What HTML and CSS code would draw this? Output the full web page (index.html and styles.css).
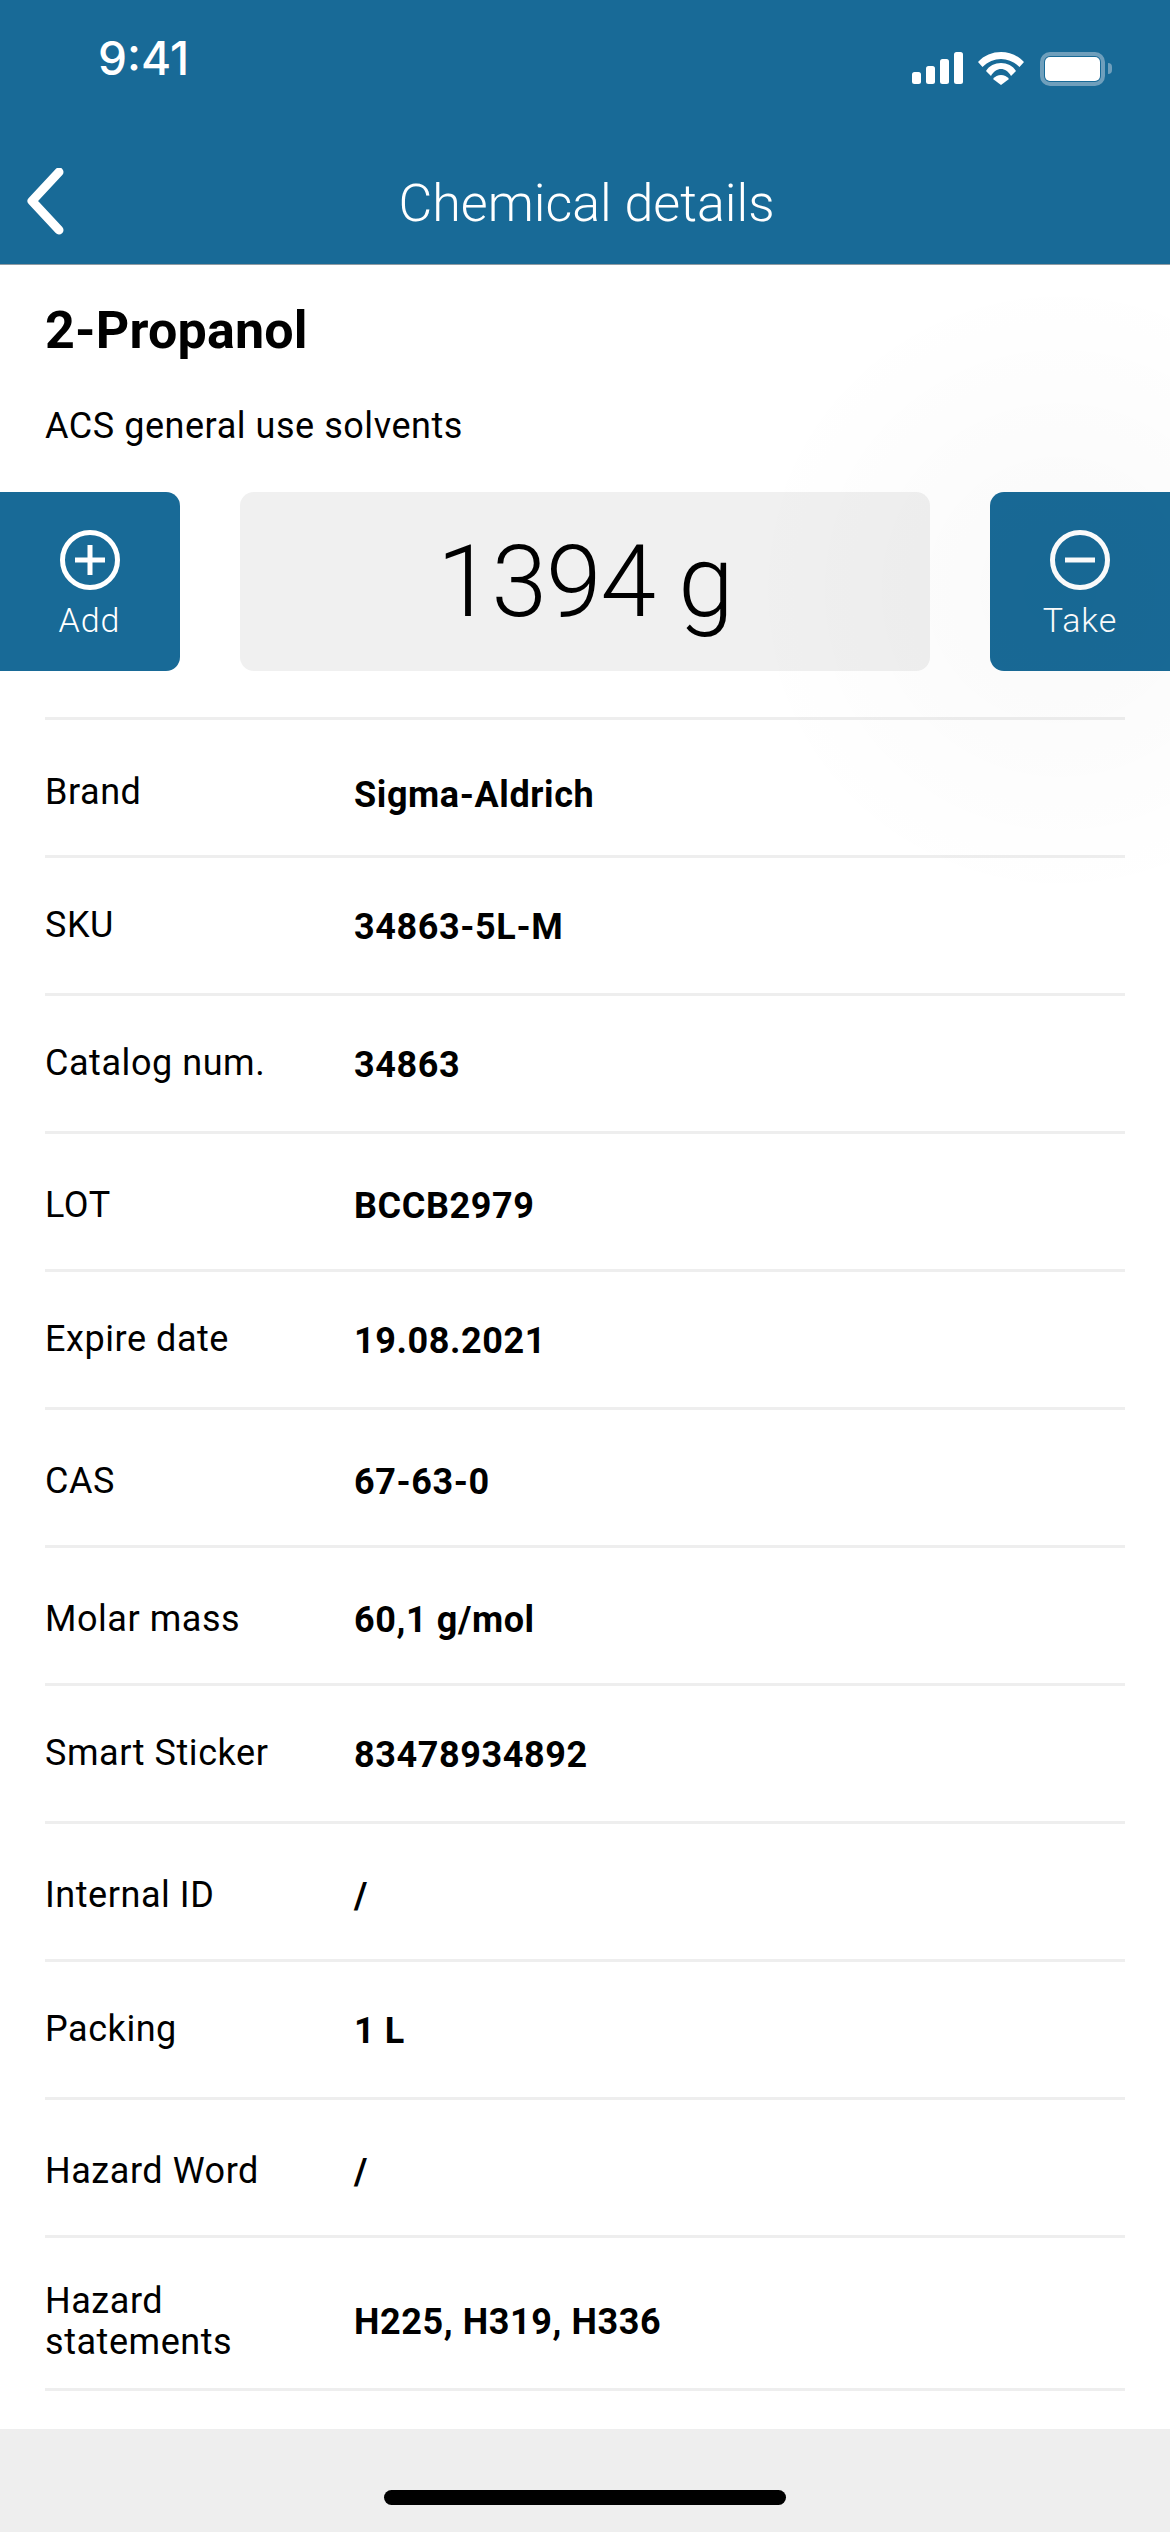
FILE: index.html
```html
<!DOCTYPE html>
<html lang="en">

<head>
  <meta charset="UTF-8">
  <meta name="viewport" content="width=device-width, initial-scale=1.0">
  <title>Chemical details</title>
  <link rel="stylesheet" href="styles.css">
</head>

<body>
  <div class="page">
    <!--header-->
    <header class="top">
      <div class="status">
        <span class="time">9:41</span>
        <div class="status-icons">
          <svg class="signal" width="51" height="32" viewBox="0 0 51 32">
            <rect x="0" y="20" width="9" height="12" rx="2.500" />
            <rect x="14" y="14" width="9" height="18" rx="2.500" />
            <rect x="28" y="7" width="9" height="25" rx="2.500" />
            <rect x="42" y="0" width="9" height="32" rx="2.500" />
          </svg>
          <svg class="wifi" width="46" height="33" viewBox="0 0 46 33">
            <path d="M0 10C12 -3.300 34 -3.300 46 10L41.500 15C31 4.300 15 4.300 4.500 15Z" />
            <path d="M8 19C14 8.300 32 8.300 38 19L33 24C28 14.700 18 14.700 13 24Z" />
            <path d="M15 27C19 21.700 27 21.700 31 27L23 33Z" />
          </svg>
          <div class="battery">
            <div class="battery-level"></div>
          </div>
          <div class="battery-cap"></div>
        </div>
      </div>
      <div class="nav">
        <svg class="back" width="40" height="68" viewBox="0 0 40 68">
          <path d="M33 4L6 33L33 62" />
        </svg>
        <h1>Chemical details</h1>
      </div>
    </header>

    <main class="content">
      <h2>2-Propanol</h2>
      <p class="sub">ACS general use solvents</p>

      <div class="stock">
        <div class="stock-btn add">
          <svg width="60" height="60" viewBox="0 0 60 60">
            <circle cx="30" cy="30" r="27.500" />
            <path d="M30 15V45M15 30H45" />
          </svg>
          <span>Add</span>
        </div>
        <div class="amount">1394 g</div>
        <div class="stock-btn take">
          <svg width="60" height="60" viewBox="0 0 60 60">
            <circle cx="30" cy="30" r="27.500" />
            <path d="M15 30H45" />
          </svg>
          <span>Take</span>
        </div>
      </div>

      <div class="details">
        <div class="row first"><span class="label">Brand</span><span class="value">Sigma-Aldrich</span></div>
        <div class="row"><span class="label">SKU</span><span class="value">34863-5L-M</span></div>
        <div class="row"><span class="label">Catalog num.</span><span class="value">34863</span></div>
        <div class="row low"><span class="label">LOT</span><span class="value">BCCB2979</span></div>
        <div class="row"><span class="label">Expire date</span><span class="value">19.08.2021</span></div>
        <div class="row low"><span class="label">CAS</span><span class="value">67-63-0</span></div>
        <div class="row low"><span class="label">Molar mass</span><span class="value">60,1 g/mol</span></div>
        <div class="row"><span class="label">Smart Sticker</span><span class="value">83478934892</span></div>
        <div class="row low"><span class="label">Internal ID</span><span class="value">/</span></div>
        <div class="row"><span class="label">Packing</span><span class="value">1 L</span></div>
        <div class="row low"><span class="label">Hazard Word</span><span class="value">/</span></div>
        <div class="row tall"><span class="label">Hazard<br>statements</span><span class="value">H225, H319, H336</span></div>
      </div>
    </main>

    <footer class="bottom">
      <div class="home-bar"></div>
    </footer>

    <div class="shade"></div>
  </div>
</body>

</html>
```

FILE: styles.css
```css
* {
  margin: 0;
  padding: 0;
  box-sizing: border-box;
}

html,
body {
  width: 1170px;
  height: 2532px;
  overflow: hidden;
  background-color: #fff;
}

body {
  font-family: Roboto, "Liberation Sans", sans-serif;
  color: #000;
}

.page {
  position: relative;
  display: flex;
  flex-direction: column;
  width: 1170px;
  height: 2532px;
}

/* header */
.top {
  height: 265px;
  background-color: #186a97;
  border-bottom: 1px solid #8f9ba3;
  color: #fff;
}

.status {
  display: flex;
  justify-content: space-between;
  height: 130px;
  padding: 33px 58px 0 98px;
}

.time {
  font-family: Inter, "Liberation Sans", sans-serif;
  font-size: 46px;
  font-weight: 500;
  line-height: 50px;
}

.status-icons {
  display: flex;
  align-items: flex-start;
  padding-top: 19px;
  height: 60px;
}

.signal {
  fill: #fff;
  margin-right: 15px;
}

.wifi {
  fill: #fff;
  margin-right: 16px;
}

.battery {
  width: 65px;
  height: 34px;
  padding: 1px;
  border: 4px solid #6f9fbc;
  border-radius: 10px;
}

.battery-level {
  width: 100%;
  height: 100%;
  background-color: #fff;
  border-radius: 5px;
}

.battery-cap {
  width: 4px;
  height: 11px;
  margin: 11px 0 0 3px;
  background-color: #6f9fbc;
  border-radius: 0 6px 6px 0;
}

.nav {
  position: relative;
  display: flex;
  justify-content: center;
  height: 134px;
  padding-left: 3px;
}

.nav h1 {
  height: 70px;
  margin-top: 39px;
  font-size: 52px;
  font-weight: 300;
  line-height: 70px;
}

.back {
  position: absolute;
  left: 26px;
  top: 38px;
  fill: none;
  stroke: #fff;
  stroke-width: 9;
  stroke-linecap: round;
  stroke-linejoin: round;
}

/* main */
.content {
  flex: 1;
}

.content h2 {
  padding: 38px 45px 0;
  font-size: 52px;
  font-weight: 700;
  letter-spacing: .2px;
  line-height: 56px;
}

.sub {
  padding: 45px 45px 0;
  font-size: 36px;
  font-weight: 400;
  letter-spacing: .54px;
  line-height: 44px;
}

.stock {
  display: flex;
  justify-content: space-between;
  height: 179px;
  margin-top: 44px;
}

.stock-btn {
  display: flex;
  flex-direction: column;
  align-items: center;
  width: 180px;
  padding-top: 38px;
  background-color: #186a97;
  color: #fff;
  font-size: 34px;
  font-weight: 300;
  letter-spacing: 1px;
}

.stock-btn svg {
  fill: none;
  stroke: #fff;
  stroke-width: 5;
  margin-bottom: 10px;
}

.stock-btn.add {
  border-radius: 0 14px 14px 0;
  padding-right: 1px;
}

.stock-btn.take {
  border-radius: 14px 0 0 14px;
}

.amount {
  width: 690px;
  background-color: #f0f0f0;
  border-radius: 14px;
  font-size: 100px;
  font-weight: 300;
  letter-spacing: -1px;
  line-height: 179px;
  text-align: center;
}

.details {
  margin: 46px 45px 0;
  border-top: 3px solid #eee;
}

.row {
  display: flex;
  align-items: center;
  height: 138px;
  border-bottom: 3px solid #eee;
  font-size: 36px;
  letter-spacing: .55px;
}

.row.first {
  padding-top: 10px;
}

.row.low {
  padding-top: 7px;
}

.row.tall {
  height: 153px;
  padding-top: 18px;
}

.label {
  width: 309px;
  font-weight: 400;
  line-height: 41px;
}

.value {
  margin-top: 2px;
  font-weight: 700;
  letter-spacing: .6px;
}

.row.first .value {
  margin-top: 4px;
}

.row.tall .value {
  margin-top: 0;
}

/* bottom bar */
.bottom {
  display: flex;
  justify-content: center;
  height: 103px;
  padding-top: 61px;
  background-color: #eee;
}

.home-bar {
  width: 402px;
  height: 15px;
  background-color: #000;
  border-radius: 8px;
}

/* faint shading on the right */
.shade {
  position: absolute;
  left: 680px;
  top: 270px;
  width: 490px;
  height: 640px;
  background: radial-gradient(circle 320px at 380px 320px, rgba(0, 0, 0, .022), rgba(0, 0, 0, 0));
  pointer-events: none;
}
```
